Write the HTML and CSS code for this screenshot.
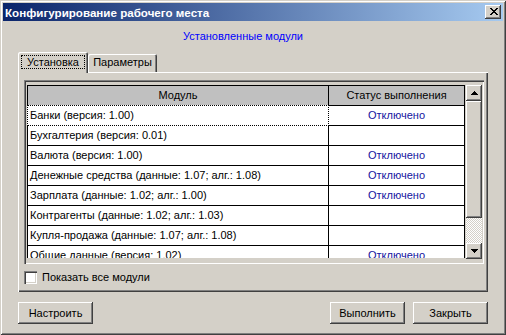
FILE: index.html
```html
<!DOCTYPE html>
<html lang="ru">
<head>
  <meta charset="UTF-8" />
  <title>Конфигурирование рабочего места</title>
  <link rel="stylesheet" href="styles.css">
</head>
<body>
  <div class="window">
    <div class="titlebar">
      <span class="title">Конфигурирование рабочего места</span>
      <button class="close-btn">
        <svg width="8" height="7" viewBox="0 0 8 7" shape-rendering="crispEdges">
          <path d="M0 0h2v1h-2zM6 0h2v1h-2zM1 1h2v1h-2zM5 1h2v1h-2zM2 2h4v1h-4zM3 3h2v1h-2zM2 4h4v1h-4zM1 5h2v1h-2zM5 5h2v1h-2zM0 6h2v1h-2zM6 6h2v1h-2z" fill="#000"/>
        </svg>
      </button>
    </div>

    <div class="client">
      <div class="caption">Установленные модули</div>

      <div class="tabs">
        <div class="tab active"><span class="focus">Установка</span></div>
        <div class="tab">Параметры</div>
      </div>

      <div class="tab-panel">
        <div class="grid-box">
          <div class="grid">
            <div class="cell head">Модуль</div>
            <div class="cell head">Статус выполнения</div>

            <div class="cell selected">Банки (версия: 1.00)</div>
            <div class="cell status">Отключено</div>

            <div class="cell">Бухгалтерия (версия: 0.01)</div>
            <div class="cell status"></div>

            <div class="cell">Валюта (версия: 1.00)</div>
            <div class="cell status">Отключено</div>

            <div class="cell">Денежные средства (данные: 1.07; алг.: 1.08)</div>
            <div class="cell status">Отключено</div>

            <div class="cell">Зарплата (данные: 1.02; алг.: 1.00)</div>
            <div class="cell status">Отключено</div>

            <div class="cell">Контрагенты (данные: 1.02; алг.: 1.03)</div>
            <div class="cell status"></div>

            <div class="cell">Купля-продажа (данные: 1.07; алг.: 1.08)</div>
            <div class="cell status"></div>

            <div class="cell">Общие данные (версия: 1.02)</div>
            <div class="cell status">Отключено</div>
          </div>

          <div class="scrollbar">
            <div class="sb-btn">
              <svg width="7" height="4" viewBox="0 0 7 4" shape-rendering="crispEdges">
                <path d="M3 0h1v1h1v1h1v1h1v1H0V3h1V2h1V1h1z" fill="#000"/>
              </svg>
            </div>
            <div class="sb-thumb"></div>
            <div class="sb-track"></div>
            <div class="sb-btn">
              <svg width="7" height="4" viewBox="0 0 7 4" shape-rendering="crispEdges">
                <path d="M0 0h7v1H6v1H5v1H4v1H3V3H2V2H1V1H0z" fill="#000"/>
              </svg>
            </div>
          </div>
        </div>

        <label class="check">
          <span class="check-box"></span>
          Показать все модули
        </label>
      </div>

      <div class="buttons">
        <button class="btn">Настроить</button>
        <span class="spacer"></span>
        <button class="btn">Выполнить</button>
        <button class="btn">Закрыть</button>
      </div>
    </div>
  </div>
</body>
</html>
```

FILE: styles.css
```css
* {
  box-sizing: border-box;
}

body {
  margin: 0;
  background-color: #d4d0c8;
  font-family: "Liberation Sans", Arial, sans-serif;
  font-size: 11px;
  color: #000;
}

.window {
  width: 506px;
  height: 335px;
  padding: 3px;
  display: flex;
  flex-direction: column;
  background: #d4d0c8;
  box-shadow: inset 1px 1px #d4d0c8, inset -1px -1px #404040,
              inset 2px 2px #fff, inset -2px -2px #808080;
}

.titlebar {
  height: 18px;
  padding: 0 2px;
  display: flex;
  align-items: center;
  justify-content: space-between;
  background: linear-gradient(to right, #0a246a, #a6caf0);
}

.title {
  color: #fff;
  font-weight: bold;
  font-size: 11.6px;
}

.close-btn,
.btn,
.sb-btn,
.sb-thumb {
  background: #d4d0c8;
  border: none;
  box-shadow: inset -1px -1px #404040, inset 1px 1px #fff,
              inset -2px -2px #808080, inset 2px 2px #d4d0c8;
}

.close-btn {
  width: 16px;
  height: 14px;
  padding: 0 0 1px 1px;
  display: flex;
  align-items: center;
  justify-content: center;
}

.client {
  flex: 1;
  display: flex;
  flex-direction: column;
  padding: 0 15px 8px;
}

.caption {
  margin: 8px 20px 9px 0;
  line-height: 14px;
  text-align: center;
  color: #0000ff;
}

/* tabs */
.tabs {
  height: 20px;
  display: flex;
  align-items: flex-end;
  position: relative;
  z-index: 1;
}

.tab {
  width: 69px;
  height: 18px;
  line-height: 16px;
  text-align: center;
  background: #d4d0c8;
  border-radius: 2px 2px 0 0;
  box-shadow: inset 1px 1px #fff, inset -1px 0 #404040, inset -2px 0 #808080;
}

.tab.active {
  width: 70px;
  height: 21px;
  margin-bottom: -1px;
  padding: 3px 3px 0 3px;
}

.focus {
  display: block;
  height: 14px;
  line-height: 12px;
  border: 1px dotted #000;
}

.tab-panel {
  height: 220px;
  padding: 8px 4px 0 6px;
  box-shadow: inset 1px 1px #fff, inset -1px -1px #404040, inset -2px -2px #808080;
}

/* string grid */
.grid-box {
  height: 184px;
  display: flex;
  gap: 1px;
  padding: 5px 2px 4px 3px;
  box-shadow: inset 1px 1px #808080, inset 2px 2px #404040,
              inset -1px -1px #fff, inset -2px -2px #d4d0c8;
}

.grid {
  width: 438px;
  height: 173px;
  overflow: hidden;
  display: grid;
  grid-template-columns: 300px 135px;
  grid-auto-rows: 19px;
  gap: 1px;
  padding: 1px;
  align-content: start;
  background: #000;
}

.cell {
  padding: 0 2px;
  line-height: 19px;
  white-space: nowrap;
  background: #fff;
  position: relative;
}

.cell.head {
  text-align: center;
  background: #c0c0c0;
}

.cell.status {
  text-align: center;
  color: #1414a0;
}

.cell.selected::before,
.cell.selected::after {
  content: "";
  position: absolute;
  inset: -1px;
}

.cell.selected::before {
  border: 1px solid #fff;
}

.cell.selected::after {
  border: 1px dotted #000;
}

.scrollbar {
  width: 16px;
  height: 174px;
  display: flex;
  flex-direction: column;
}

.sb-btn {
  height: 16px;
  display: flex;
  align-items: center;
  justify-content: center;
}

.sb-thumb {
  height: 117px;
}

.sb-track {
  flex: 1;
  background: repeating-conic-gradient(#fff 0 25%, #d4d0c8 0 50%) 0 0 / 2px 2px;
}

.check {
  margin-top: 7px;
  display: flex;
  align-items: center;
  gap: 5px;
  line-height: 13px;
}

.check-box {
  width: 13px;
  height: 13px;
  background: #fff;
  box-shadow: inset 1px 1px #808080, inset 2px 2px #404040,
              inset -1px -1px #fff, inset -2px -2px #d4d0c8;
}

/* bottom buttons */
.buttons {
  margin-top: 10px;
  display: flex;
  gap: 8px;
}

.spacer {
  flex: 1;
}

.btn {
  width: 75px;
  height: 22px;
  padding: 0;
  font: inherit;
  color: #000;
}
```
